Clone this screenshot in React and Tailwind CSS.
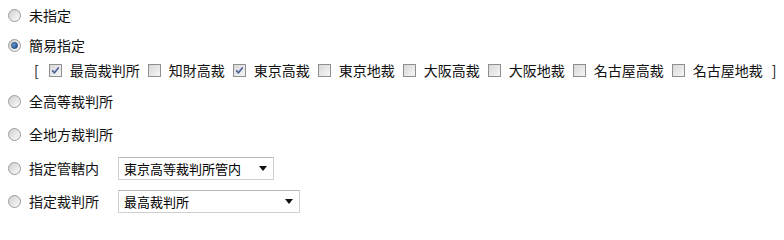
import { useState } from "react";

const COURTS = [
    { id: "saiko", label: "最高裁判所", checked: true },
    { id: "chizai", label: "知財高裁", checked: false },
    { id: "tokyo-ko", label: "東京高裁", checked: true },
    { id: "tokyo-chi", label: "東京地裁", checked: false },
    { id: "osaka-ko", label: "大阪高裁", checked: false },
    { id: "osaka-chi", label: "大阪地裁", checked: false },
    { id: "nagoya-ko", label: "名古屋高裁", checked: false },
    { id: "nagoya-chi", label: "名古屋地裁", checked: false },
];

const FONT = "font-['Meiryo','Noto_Sans_CJK_JP','Noto_Sans',sans-serif]";

function Radio({ checked }) {
    return (
        <span className="relative inline-flex w-[13px] h-[13px] shrink-0 rounded-full border border-[#9a9a9a] bg-gradient-to-br from-[#d0d0d0] to-[#fbfbfb] items-center justify-center">
            {checked && (
                <span className="w-[7px] h-[7px] rounded-full bg-gradient-to-br from-[#6fb0e8] to-[#1d4f8f] border border-[#1c3f6e]" />
            )}
        </span>
    );
}

function Check({ checked }) {
    return (
        <span className="inline-flex w-[13px] h-[13px] shrink-0 border border-[#8e8f8f] bg-gradient-to-br from-[#d8d8d8] to-[#f6f6f6] items-center justify-center">
            {checked && (
                <svg width="9" height="9" viewBox="0 0 9 9">
                    <path d="M1.2 4.4 L3.4 6.8 L7.8 1.4" fill="none" stroke="#4a5f97" strokeWidth="1.6" />
                </svg>
            )}
        </span>
    );
}

function Select({ value, width }) {
    return (
        <div
            className={`flex items-center justify-between h-[23px] border border-[#cfcfcf] border-t-[#b5b5b5] bg-white pl-[5px] pr-[6px] text-[13px] text-black ${width}`}
        >
            <span>{value}</span>
            <svg width="8" height="5" viewBox="0 0 8 5">
                <path d="M0 0 H8 L4 5 Z" fill="#111" />
            </svg>
        </div>
    );
}

export default function App() {
    const [mode] = useState("simple");

    return (
        <div className={`w-[784px] h-[220px] bg-white text-[14px] text-[#111] ${FONT}`}>
            <div className="flex flex-col pl-[8px]">
                {/* 未指定 */}
                <label className="flex items-center gap-[8px] h-[30px]">
                    <Radio checked={mode === "none"} />
                    <span>未指定</span>
                </label>

                {/* 簡易指定 */}
                <label className="flex items-center gap-[8px] h-[31px]">
                    <Radio checked={mode === "simple"} />
                    <span>簡易指定</span>
                </label>
                <div className="flex items-center h-[21px] pl-[26px] -mt-[1px]">
                    <span className="mr-[10px]">[</span>
                    {COURTS.map((c) => (
                        <span key={c.id} className="flex items-center mr-[8px]">
                            <Check checked={c.checked} />
                            <span className="ml-[8px]">{c.label}</span>
                        </span>
                    ))}
                    <span className="ml-[1px]">]</span>
                </div>

                {/* 全高等裁判所 */}
                <label className="flex items-center gap-[8px] h-[30px] mt-[5px]">
                    <Radio checked={mode === "high"} />
                    <span>全高等裁判所</span>
                </label>

                {/* 全地方裁判所 */}
                <label className="flex items-center gap-[8px] h-[30px] mt-[3px]">
                    <Radio checked={mode === "district"} />
                    <span>全地方裁判所</span>
                </label>

                {/* 指定管轄内 */}
                <div className="flex items-center h-[23px] mt-[8px]">
                    <label className="flex items-center gap-[8px] w-[110px]">
                        <Radio checked={mode === "jurisdiction"} />
                        <span>指定管轄内</span>
                    </label>
                    <Select value="東京高等裁判所管内" width="w-[156px]" />
                </div>

                {/* 指定裁判所 */}
                <div className="flex items-center h-[23px] mt-[10px]">
                    <label className="flex items-center gap-[8px] w-[110px]">
                        <Radio checked={mode === "court"} />
                        <span>指定裁判所</span>
                    </label>
                    <Select value="最高裁判所" width="w-[182px]" />
                </div>
            </div>
        </div>
    );
}
